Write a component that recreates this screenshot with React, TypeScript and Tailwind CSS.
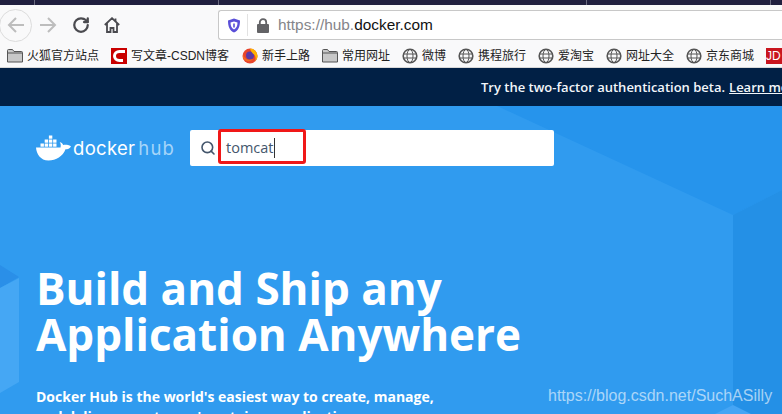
import { Search, RotateCw } from 'lucide-react'

const Folder = () => (
  <svg width="16" height="14" viewBox="0 0 16 14" className="shrink-0">
    <path d="M.5 13V1.500a1 1 0 0 1 1-1h4l1.500 2h7.500a1 1 0 0 1 1 1V13z" fill="#c8c8c8" stroke="#555" strokeWidth="1" />
    <path d="M1 4h14" stroke="#555" strokeWidth="1" />
  </svg>
)

const Globe = () => (
  <svg width="16" height="16" viewBox="0 0 16 16" className="shrink-0" fill="none" stroke="#555">
    <circle cx="8" cy="8" r="6.800" strokeWidth="1.600" />
    <ellipse cx="8" cy="8" rx="3" ry="6.500" />
    <path d="M1.500 6h13M1.500 10h13" />
  </svg>
)

const CsdnIcon = () => (
  <svg width="16" height="16" viewBox="0 0 16 16" className="shrink-0">
    <rect width="16" height="16" fill="#c90000" />
    <path d="M14 3.500H8.500C5.500 3.500 3.500 5.500 3.500 8s2 4.500 5 4.500H12" fill="none" stroke="#fff" strokeWidth="3" />
  </svg>
)

const FirefoxIcon = () => (
  <svg width="16" height="16" viewBox="0 0 16 16" className="shrink-0">
    <circle cx="8" cy="8" r="7.500" fill="#e8452c" />
    <circle cx="8" cy="7.500" r="4" fill="#5b3aa5" />
    <path d="M8 .5a7.500 7.500 0 0 1 7.500 7.500c0 2-1 4-2.500 5 1-2 .8-5-1-6.500C10.500 5 9 4 8 .5z" fill="#ffb300" />
    <path d="M1 6c1 5 6 7 10 5-2 3-8 3-10-1z" fill="#f36a21" />
  </svg>
)

const DockerLogo = () => (
  <svg width="36" height="26" viewBox="0 0 36 26" fill="#fff" className="shrink-0">
    <rect x="4.500" y="8.500" width="3.400" height="3.200" />
    <rect x="8.700" y="8.500" width="3.400" height="3.200" />
    <rect x="12.900" y="8.500" width="3.400" height="3.200" />
    <rect x="17.100" y="8.500" width="3.400" height="3.200" />
    <rect x="8.700" y="4.500" width="3.400" height="3.200" />
    <rect x="12.900" y="4.500" width="3.400" height="3.200" />
    <rect x="17.100" y="4.500" width="3.400" height="3.200" />
    <rect x="12.900" y=".5" width="3.400" height="3.200" />
    <path d="M0 12.500h24.500c.5-2 .3-4-.8-5.500 1.600.4 3 1.500 3.500 3 2-.6 4.800-.3 7.800 1.200-1 2.500-3.500 3-5.500 3C27 21 20 25.500 12.500 25.500 4.500 25.500.5 19 0 12.500z" />
  </svg>
)

const bookmarks = [
  { label: '火狐官方站点', icon: <Folder />, w: 'w-[104px]' },
  { label: '写文章-CSDN博客', icon: <CsdnIcon />, w: 'w-[131px]' },
  { label: '新手上路', icon: <FirefoxIcon />, w: 'w-[80px]' },
  { label: '常用网址', icon: <Folder />, w: 'w-[80px]' },
  { label: '微博', icon: <Globe />, w: 'w-[56px]' },
  { label: '携程旅行', icon: <Globe />, w: 'w-[80px]' },
  { label: '爱淘宝', icon: <Globe />, w: 'w-[68px]' },
  { label: '网址大全', icon: <Globe />, w: 'w-[80px]' },
  { label: '京东商城', icon: <Globe />, w: 'w-[80px]' },
]

const cjk = "font-['Liberation_Sans','Noto_Sans_CJK_SC',sans-serif]"

export default function App() {
  return (
    <div className="w-[782px] h-[414px] overflow-hidden flex flex-col bg-[#309bef]">
      {/* Tab strip */}
      <div className="h-[5px] bg-[#201f3f] flex shrink-0">
        <div className="w-[35px] border-r border-[#6a6a80]" />
        <div className="w-[184px] border-r border-[#6a6a80]" />
        <div className="w-[368px] border-r border-[#6a6a80]" />
        <div className="w-[184px] border-r border-[#6a6a80]" />
      </div>

      {/* Toolbar */}
      <div className="h-[40px] bg-[#f9f9fa] flex items-center shrink-0">
        <div className="ml-[-1px] w-[33px] h-[33px] rounded-full border border-[#dcdcdc] flex items-center justify-center shrink-0">
          <svg width="18" height="18" viewBox="0 0 18 18" fill="none" stroke="#bdbdbd" strokeWidth="2">
            <path d="M2 9h15M9 2L2 9l7 7" />
          </svg>
        </div>
        <svg width="18" height="18" viewBox="0 0 18 18" fill="none" stroke="#bdbdbd" strokeWidth="2" className="ml-[7px] shrink-0">
          <path d="M1 9h15M9 2l7 7-7 7" />
        </svg>
        <RotateCw size={18} color="#4a4a4f" strokeWidth={3} className="ml-[15px] shrink-0" />
        <svg width="16" height="16" viewBox="0 0 16 16" fill="none" stroke="#4a4a4f" strokeWidth="1.800" className="ml-[14px] shrink-0">
          <path d="M.8 8L8 1.200 15.200 8M3 6.500V15h3.500v-4h3v4H13V6.500" />
          <path d="M11.500 1.500v3" />
        </svg>
        <div className="ml-[98px] h-[30px] flex-1 bg-white border border-[#c8c8c8] border-r-0 rounded-l-[3px] flex items-center">
          <svg width="14" height="15" viewBox="0 0 14 15" className="ml-[8px] shrink-0">
            <path d="M7 .5l6 2c0 6-1.500 10-6 12-4.500-2-6-6-6-12z" fill="#5a4fd8" />
            <path d="M7 3.500l3.500 1c0 3.500-1 5.500-3.500 7-2.500-1.500-3.500-3.500-3.500-7z" fill="#fff" />
            <rect x="6.200" y="5.500" width="1.600" height="4" fill="#5a4fd8" />
          </svg>
          <div className="w-px h-[22px] bg-[#e2e2e2] ml-[6px] shrink-0" />
          <svg width="14" height="15" viewBox="0 0 14 15" className="ml-[8px] shrink-0">
            <rect x="1" y="6" width="12" height="9" rx="1" fill="#636366" />
            <path d="M3.800 7V4.300a3.200 3.200 0 0 1 6.400 0V7" fill="none" stroke="#636366" strokeWidth="1.800" />
          </svg>
          <span className="ml-[8px] text-[15.400px] text-[#85858a] font-['Liberation_Sans',sans-serif]">
            https://hub.<span className="text-[#111]">docker.com</span>
          </span>
        </div>
      </div>

      {/* Bookmarks */}
      <div className={`h-[23px] bg-[#f9f9fa] border-b border-[#d8d8d8] flex items-center pl-[7px] text-[12px] text-[#222] shrink-0 ${cjk}`}>
        {bookmarks.map((b) => (
          <div key={b.label} className={`flex items-center gap-[4px] shrink-0 ${b.w}`}>
            {b.icon}
            <span className="whitespace-nowrap">{b.label}</span>
          </div>
        ))}
        <div className="bg-[#c9151e] w-[16px] h-[16px] text-white text-[12px] leading-[16px] overflow-hidden shrink-0">JD</div>
      </div>

      {/* Notice banner */}
      <div className="h-[38px] bg-[#012045] flex items-center pl-[481px] pt-px shrink-0 whitespace-nowrap text-[13px] font-semibold text-[#f2f6fa] font-['Open_Sans',sans-serif]">
        Try the two-factor authentication beta.
        <span className="ml-[4px] underline">Learn more</span>
      </div>

      {/* Hero */}
      <div className="relative flex-1 overflow-hidden">
        <svg width="782" height="308" className="absolute inset-0">
          <polygon points="497,0 782,0 782,84 733,109" fill="#2694ec" />
          <polygon points="733,109 782,84 782,308 733,308" fill="#2490e6" />
          <polygon points="733,299 715,308 751,308" fill="#45a5f5" />
          <polygon points="0,159 19,171 0,182" fill="#2a8fe8" />
          <polygon points="0,182 19,172 19,276 0,287" fill="#45a7f4" />
        </svg>
        <div className="relative pl-[36px] pt-[24px]">
          <div className="flex items-center">
            <div className="w-[154px] flex items-center shrink-0 font-['Inter',sans-serif] text-[18.500px] leading-[26px] font-normal">
              <DockerLogo />
              <span className="ml-[1px] text-white tracking-[0.3px]">docker</span>
              <span className="ml-[3px] text-[#a5d5f9] tracking-[1.200px]">hub</span>
            </div>
            <div className="w-[364px] h-[36px] bg-white rounded-[2px] flex items-center pl-[10px] relative">
              <Search size={16} color="#44566c" strokeWidth={2.400} />
              <span className="ml-[10px] text-[14.500px] text-[#44566c] font-['Open_Sans',sans-serif] leading-[20px]">tomcat</span>
              <span className="w-px h-[20px] bg-[#333]" />
              <div className="absolute left-[28px] top-[-1px] w-[88px] h-[35px] border-[3px] border-[#f01818] rounded-[3px]" />
            </div>
          </div>
          <h1 className="mt-[99px] text-[44px] leading-[46px] font-bold text-white font-['Open_Sans',sans-serif] whitespace-nowrap">
            Build and Ship any<br />Application Anywhere
          </h1>
          <p className="mt-[30px] text-[14px] leading-[20px] font-bold text-white font-['Open_Sans',sans-serif] whitespace-nowrap">
            Docker Hub is the world's easiest way to create, manage,<br />and deliver your teams' container applications.
          </p>
        </div>
        {/* Watermark */}
        <span className="absolute left-[548px] top-[278px] text-[16px] text-white/60 font-['Liberation_Sans',sans-serif] whitespace-nowrap">
          https://blog.csdn.net/SuchASilly
        </span>
      </div>
    </div>
  )
}
